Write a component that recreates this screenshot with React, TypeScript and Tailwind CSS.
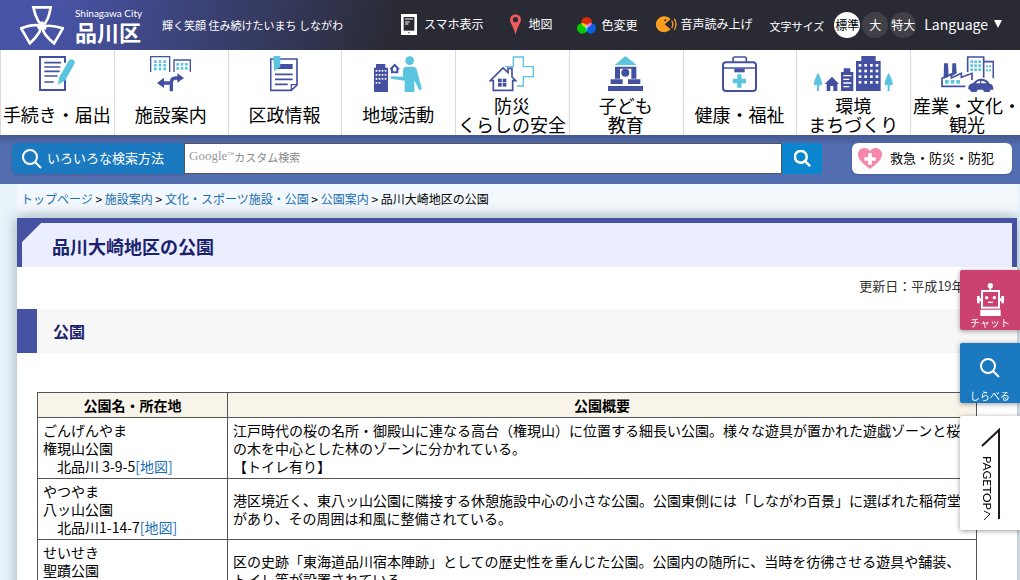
import type { ReactNode } from "react";

const NAVY = "#4451a2";
const CYAN = "#5bc5e0";

type IconProps = { w: number; box: number; children: ReactNode };

function NavIcon({ w, box, children }: IconProps) {
    return (
        <svg width={w} height={36} viewBox={`0 0 ${box} 108`} fill="none" aria-hidden="true">
            {children}
        </svg>
    );
}

type DotsProps = { x: number; y: number; cols: number; rows: number; dx: number; dy: number; s: number; fill: string };

function Dots({ x, y, cols, rows, dx, dy, s, fill }: DotsProps) {
    return (
        <>
            {Array.from({ length: cols * rows }, (_, i) => (
                <rect key={i} x={x + (i % cols) * dx} y={y + Math.floor(i / cols) * dy} width={s} height={s} fill={fill} />
            ))}
        </>
    );
}

const navItems = [
    {
        lines: ["手続き・届出"],
        icon: (
            <NavIcon w={36} box={108}>
                <path d="M78 20V3H3v99h75V70" stroke={NAVY} strokeWidth="6" />
                <path d="M16 20h50M16 33h48M16 46h46M16 60h40M16 78h28" stroke={NAVY} strokeWidth="5" />
                <path d="M97 20L72 64" stroke={CYAN} strokeWidth="20" strokeLinecap="round" />
                <path d="M61 62l-4 24 22-13z" fill={CYAN} />
            </NavIcon>
        ),
    },
    {
        lines: ["施設案内"],
        icon: (
            <NavIcon w={41} box={123}>
                <path d="M2 48V2h57v46M72 48V12h49v36" stroke={NAVY} strokeWidth="4" />
                <Dots x={12} y={13} cols={3} rows={3} dx={14} dy={11} s={8} fill={CYAN} />
                <Dots x={79} y={21} cols={3} rows={2} dx={13} dy={12} s={8} fill={CYAN} />
                <path d="M64 106V80q0-14 14-14h8M64 81H38" stroke={NAVY} strokeWidth="10" />
                <path d="M82 52l20 14-20 14zM42 65L21 81l21 15z" fill={NAVY} />
            </NavIcon>
        ),
    },
    {
        lines: ["区政情報"],
        icon: (
            <NavIcon w={28} box={84}>
                <path d="M2 9h79v78L64 103H2z" stroke={NAVY} strokeWidth="5" />
                <path d="M64 102V86h18" stroke={NAVY} strokeWidth="4" />
                <path d="M20 24h48v15H20z" fill={NAVY} />
                <path d="M15 55h53M15 70h53M15 85h38" stroke={NAVY} strokeWidth="5" />
                <path d="M10 0h21v32L12 46z" fill={CYAN} />
            </NavIcon>
        ),
    },
    {
        lines: ["地域活動"],
        icon: (
            <NavIcon w={48} box={144}>
                <path d="M0 35h6V24h28v11h8v73H0z" fill={NAVY} />
                <Dots x={5} y={42} cols={4} rows={3} dx={9} dy={12} s={5} fill="#fff" />
                <Dots x={5} y={78} cols={2} rows={1} dx={9} dy={12} s={5} fill="#fff" />
                <path d="M49 40l13-13 13 13M54 36v13h16V36" stroke={NAVY} strokeWidth="6" />
                <circle cx="107" cy="14" r="13" fill={CYAN} />
                <path d="M96 32h22q7 0 10 8l16 60-8 3-15-30v35H92V74L54 69q-7-3-3-8l36 1V42q1-9 9-10z" fill={CYAN} />
            </NavIcon>
        ),
    },
    {
        lines: ["防災", "くらしの安全"],
        icon: (
            <NavIcon w={45} box={135}>
                <path d="M48 32h25V3h30v29h30v30h-30v28H84" stroke={CYAN} strokeWidth="4" />
                <path d="M4 74l38-38 15 14V37h12v26l11 11h-9v29H13V74z" stroke={NAVY} strokeWidth="5" />
                <Dots x={27} y={68} cols={2} rows={2} dx={14} dy={13} s={11} fill={NAVY} />
            </NavIcon>
        ),
    },
    {
        lines: ["子ども", "教育"],
        icon: (
            <NavIcon w={35} box={105}>
                <path d="M20 27L52 0l34 27z" fill={CYAN} />
                <path d="M21 32h64v36H70V38H36v30H21zM8 70h36v14H8zM60 70h37v14H60zM0 90h105v15H0z" fill={NAVY} />
                <circle cx="52" cy="50" r="12" fill={NAVY} />
            </NavIcon>
        ),
    },
    {
        lines: ["健康・福祉"],
        icon: (
            <NavIcon w={35} box={105}>
                <rect x="3" y="19" width="99" height="86" rx="9" stroke={NAVY} strokeWidth="6" />
                <path d="M33 18V8q0-5 5-5h30q5 0 5 5v10M3 36h99" stroke={NAVY} strokeWidth="5" />
                <path d="M37 38h31v11H37z" fill={NAVY} />
                <path d="M52 55v40M32 75h40" stroke={CYAN} strokeWidth="13" />
            </NavIcon>
        ),
    },
    {
        lines: ["環境", "まちづくり"],
        icon: (
            <NavIcon w={79} box={237}>
                <path d="M12 50q16 30 11 38H15v17H9V88H1q-5-8 11-38zM224 50q16 30 11 38h-8v17h-6V88h-8q-5-8 11-38z" fill={CYAN} />
                <path d="M32 84l22-22 21 22h-5v21H58V90H49v15H38V84zM81 48h8V37h20v11h9v57H81zM126 15h16V0h43v15h15v90h-74z" fill={NAVY} />
                <path d="M88 59h24M88 70h18M88 81h24M88 92h18" stroke="#fff" strokeWidth="4" />
                <Dots x={134} y={24} cols={4} rows={4} dx={17} dy={17} s={8} fill="#fff" />
            </NavIcon>
        ),
    },
    {
        lines: ["産業・文化・", "観光"],
        icon: (
            <NavIcon w={53} box={159}>
                <path d="M80 48V3h48v62M128 17h29v50" stroke={NAVY} strokeWidth="5" />
                <Dots x={88} y={13} cols={3} rows={3} dx={12} dy={12} s={8} fill={CYAN} />
                <Dots x={135} y={28} cols={2} rows={2} dx={9} dy={12} s={6} fill={CYAN} />
                <path d="M9 22h12l2 40L8 68zM34 22h11l2 30-14 8z" fill={NAVY} />
                <path d="M73 91H3V67l28-13v12l30-14v12l32-12v20" stroke={NAVY} strokeWidth="5" />
                <Dots x={12} y={72} cols={3} rows={1} dx={17} dy={10} s={11} fill={CYAN} />
                <path d="M82 100q-2-16 14-18 10-14 24-14 18 0 26 15 12 2 11 18h-8a12 12 0 0 1-23 0h-16a12 12 0 0 1-23 0z" fill={NAVY} />
                <circle cx="99" cy="101" r="8" fill={NAVY} />
                <circle cx="138" cy="101" r="8" fill={NAVY} />
                <path d="M104 82q6-8 13-8v8zM121 74q11 0 16 8h-16z" fill="#fff" />
            </NavIcon>
        ),
    },
];

const crumbs = ["トップページ", "施設案内", "文化・スポーツ施設・公園", "公園案内"];

const parks = [
    {
        kana: "ごんげんやま",
        name: "権現山公園",
        address: "北品川 3-9-5",
        text: ["江戸時代の桜の名所・御殿山に連なる高台（権現山）に位置する細長い公園。様々な遊具が置かれた遊戯ゾーンと桜の木を中心とした林のゾーンに分かれている。", "【トイレ有り】"],
    },
    {
        kana: "やつやま",
        name: "八ッ山公園",
        address: "北品川1-14-7",
        text: ["港区境近く、東八ッ山公園に隣接する休憩施設中心の小さな公園。公園東側には「しながわ百景」に選ばれた稲荷堂があり、その周囲は和風に整備されている。"],
    },
    {
        kana: "せいせき",
        name: "聖蹟公園",
        address: "北品川2-7-21",
        text: ["区の史跡「東海道品川宿本陣跡」としての歴史性を重んじた公園。公園内の随所に、当時を彷彿させる遊具や舗装、トイレ等が設置されている。"],
    },
];

function Emblem() {
    const petal = "M12 8Q-16-8-26-57H26Q20-16 2-2";
    return (
        <svg width="44" height="40" viewBox="60 16 132 120" fill="none" stroke="#fff" strokeWidth="8" aria-hidden="true">
            <g transform="translate(126 80)">
                <path d={petal} />
                <path d={petal} transform="rotate(120)" />
                <path d={petal} transform="rotate(240)" />
            </g>
        </svg>
    );
}

function Magnifier({ size, width }: { size: number; width: number }) {
    return (
        <svg width={size} height={size} viewBox="0 0 20 20" fill="none" stroke="currentColor" strokeWidth={width} aria-hidden="true">
            <circle cx="8" cy="8" r="7" />
            <path d="M13 13l6 6" />
        </svg>
    );
}

function Header() {
    return (
        <header className="flex h-[50px] items-center whitespace-nowrap bg-[linear-gradient(105deg,#4753a4_60px,#2a2a34_390px)] pl-5 pr-[18px] text-xs text-white">
            <a href="#top" className="flex items-center gap-[11px]">
                <Emblem />
                <span className="flex w-[70px] flex-col">
                    <span className="font-[Lato,sans-serif] text-[10px] leading-3">Shinagawa City</span>
                    <span className="text-[22px] font-bold leading-6">品川区</span>
                </span>
            </a>
            <p className="ml-[17px] text-[11px]">輝く笑顔 住み続けたいまち しながわ</p>

            <div className="ml-auto flex items-center">
                <a href="#sp" className="flex items-center gap-[7px] pb-[2px]">
                    <svg width="16" height="21" viewBox="0 0 48 63" aria-hidden="true">
                        <path d="M0 0h48v63H0z" fill="#fff" />
                        <path d="M8 9h32v41H8z" fill="#2a2a34" />
                        <path d="M12 15h24M12 24h14M12 30h10" stroke="#fff" strokeWidth="3" />
                        <circle cx="24" cy="56" r="2" fill="#2a2a34" />
                    </svg>
                    スマホ表示
                </a>
                <a href="#map" className="ml-[26px] flex items-center gap-2 pb-[2px]">
                    <svg width="11" height="21" viewBox="0 0 34 64" aria-hidden="true">
                        <path d="M17 0a17 17 0 0 1 17 17c0 10-11 20-17 47C11 37 0 27 0 17A17 17 0 0 1 17 0zm0 9a8 8 0 1 0 0 16 8 8 0 0 0 0-16z" fill="#f05a5c" fillRule="evenodd" />
                    </svg>
                    地図
                </a>
                <a href="#color" className="ml-6 flex items-center gap-[6px]">
                    <svg width="19" height="17" viewBox="0 0 57 51" className="isolate" aria-hidden="true">
                        <circle cx="29" cy="16" r="16" fill="#dc2c08" className="mix-blend-screen" />
                        <circle cx="16" cy="34" r="16" fill="#0c0" className="mix-blend-screen" />
                        <circle cx="41" cy="34" r="16" fill="#0a5fe0" className="mix-blend-screen" />
                    </svg>
                    色変更
                </a>
                <a href="#voice" className="ml-[18px] flex items-center gap-1 pb-[2px]">
                    <svg width="21" height="17" viewBox="0 0 63 51" fill="none" aria-hidden="true">
                        <path d="M26 25L44 10A25 24 0 1 0 44 40z" fill="#fb9d1f" />
                        <circle cx="28" cy="13" r="3" fill="#2a2a34" />
                        <path d="M47 14q7 11 0 22M55 8q10 17 0 34" stroke="#fb9d1f" strokeWidth="4" />
                    </svg>
                    音声読み上げ
                </a>
                <span className="ml-[17px] pt-[2px] text-[11px]">文字サイズ</span>
                <div className="ml-[10px] flex gap-[2px]">
                    <button className="size-[26px] rounded-full bg-white text-black">標準</button>
                    <button className="size-[26px] rounded-full bg-[#404046]">大</button>
                    <button className="size-[26px] rounded-full bg-[#404046]">特大</button>
                </div>
                <button className="ml-2 flex items-center gap-[6px] pb-[2px] text-sm">
                    Language
                    <svg width="8" height="8" viewBox="0 0 8 8" aria-hidden="true">
                        <path d="M0 0h8L4 8z" fill="#fff" />
                    </svg>
                </button>
            </div>
        </header>
    );
}

function GlobalNav() {
    return (
        <nav className="overflow-x-clip bg-white">
            <ul className="-mr-1 grid grid-cols-9">
                {navItems.map((item) => (
                    <li key={item.lines[0]} className="border-l border-[#d9d9de] pr-px">
                        <a href="#nav" className="flex h-[85px] flex-col items-center pt-[6px] text-lg text-black">
                            {item.icon}
                            <span className="flex flex-1 flex-col justify-center whitespace-nowrap pt-[2px] text-center leading-[19px]">
                                {item.lines.map((line) => (
                                    <span key={line}>{line}</span>
                                ))}
                            </span>
                        </a>
                    </li>
                ))}
            </ul>
        </nav>
    );
}

function SearchBar() {
    return (
        <div className="flex h-[49px] items-start bg-[linear-gradient(#45588f,#526db0_10px)] pl-3 pr-2 pt-2">
            <a href="#search" className="flex h-[31px] w-[172px] items-center gap-[5px] rounded-l-md bg-[#1b7abf] pl-[10px] text-[13px] text-white shadow">
                <Magnifier size={20} width={2} />
                いろいろな検索方法
            </a>
            <form className="flex flex-1" onSubmit={(e) => e.preventDefault()}>
                <label className="flex h-[31px] flex-1 border border-[#555] bg-white pl-1 text-[11px] text-[#999]">
                    <span className="font-['Liberation_Serif',serif] text-[13px] leading-6">
                        Google<sup className="text-[7px]">™</sup>
                    </span>
                    <input
                        type="text"
                        aria-label="サイト内検索"
                        placeholder="カスタム検索"
                        className="h-[25px] min-w-0 flex-1 text-black outline-none placeholder:text-[#888]"
                    />
                </label>
                <button aria-label="検索" className="flex h-[31px] w-10 items-center justify-center rounded-r-sm bg-[#0a86cf] text-white">
                    <Magnifier size={17} width={3} />
                </button>
            </form>
            <a href="#emergency" className="ml-[30px] flex h-[31px] w-40 items-center gap-2 rounded-md bg-white pl-[6px] text-[13px] text-black shadow">
                <svg width="24" height="21" viewBox="0 0 72 63" aria-hidden="true">
                    <path d="M36 63C16 48 0 36 0 19 0-2 28-6 36 10 44-6 72-2 72 19c0 17-16 29-36 44z" fill="#f487aa" />
                    <path d="M36 16v34M19 33h34" stroke="#fff" strokeWidth="11" />
                </svg>
                救急・防災・防犯
            </a>
        </div>
    );
}

function SideButtons() {
    return (
        <div className="fixed right-0 top-[270px] flex w-[60px] flex-col gap-[13px] text-[10px] leading-[14px] text-white">
            <a href="#chat" className="flex h-[60px] flex-col items-center justify-end rounded-l-xs bg-[#cb4271] shadow-[0_1px_5px_rgba(0,0,0,0.4)]">
                <svg width="27" height="33" viewBox="0 0 81 99" fill="none" aria-hidden="true">
                    <circle cx="40" cy="8" r="8" fill="#fff" />
                    <path d="M40 8v16" stroke="#fff" strokeWidth="5" />
                    <rect x="15" y="24" width="51" height="50" stroke="#fff" strokeWidth="6" />
                    <path d="M0 39h8v22H0zM73 39h8v22h-8zM8 46h6v8H8zM67 46h6v8h-6zM10 80h61v19H10z" fill="#fff" />
                    <circle cx="29" cy="44" r="5" fill="#fff" />
                    <circle cx="52" cy="44" r="5" fill="#fff" />
                    <path d="M33 58h15" stroke="#fff" strokeWidth="4" />
                </svg>
                チャット
            </a>
            <a href="#find" className="flex h-[60px] flex-col items-center justify-between rounded-l-xs bg-[#1b7abf] pt-[15px] shadow-[0_1px_5px_rgba(0,0,0,0.4)]">
                <Magnifier size={20} width={2} />
                しらべる
            </a>
            <a href="#top" className="flex h-[114px] justify-center rounded-l-xs bg-white pt-3 text-xs text-black shadow-[0_1px_5px_rgba(0,0,0,0.4)]">
                <span className="mt-7 flex flex-col items-center whitespace-nowrap font-[Lato,sans-serif] leading-3">
                    <span className="[writing-mode:vertical-rl]">PAGETOP</span>
                    <svg width="8" height="11" viewBox="0 0 8 11" fill="none" stroke="#231815" aria-hidden="true">
                        <path d="M1 1l6 3-6 6" />
                    </svg>
                </span>
                <svg width="19" height="91" viewBox="0 0 19 91" className="-ml-3 shrink-0" fill="none" stroke="#231815" strokeWidth="2" aria-hidden="true">
                    <path d="M1 18L18 2v89" />
                </svg>
            </a>
        </div>
    );
}

export default function App() {
    return (
        <div id="top" className="min-h-screen overflow-hidden bg-[#e8f3fa] font-['Noto_Sans_CJK_JP',sans-serif] text-sm text-black">
            <Header />
            <GlobalNav />
            <SearchBar />

            <div className="ml-[17px] mr-[3px]">
                <div className="h-7 whitespace-nowrap bg-[#f3f8fd] pl-1 text-xs leading-[30px]">
                    {crumbs.map((c) => (
                        <span key={c}>
                            <a href="#crumb" className="text-[#1a6fb0]">{c}</a>
                            {" > "}
                        </span>
                    ))}
                    品川大崎地区の公園
                </div>

                <main className="mt-[6px] bg-white pb-10 shadow-[0_0_14px_rgba(60,80,90,0.45)]">
                    <h1 className="h-[49px] border-x-[5px] border-t-[5px] border-[#4552a2] bg-[linear-gradient(135deg,#4552a2_13px,#ebeeff_14px)] pl-[30px] text-lg font-bold leading-[46px] text-[#1a226c]">
                        品川大崎地区の公園
                    </h1>
                    <p className="h-[42px] pr-3 text-right text-[13px] leading-[38px] text-[#333]">更新日：平成19年4月1日</p>
                    <h2 className="h-11 border-l-[20px] border-[#4552a2] bg-[#f7f7f7] pl-4 text-base font-bold leading-[44px] text-[#1a226c]">公園</h2>

                    <div className="ml-5 mr-10 mt-[39px]">
                        <table className="w-full border-collapse leading-[18px]">
                            <thead>
                                <tr className="bg-[#f8f4ea]">
                                    <th className="w-[190px] border border-[#555] px-[5px] py-[3px] font-bold">公園名・所在地</th>
                                    <th className="border border-[#555] px-[5px] py-[3px] font-bold">公園概要</th>
                                </tr>
                            </thead>
                            <tbody>
                                {parks.map((p) => (
                                    <tr key={p.name}>
                                        <td className="border border-[#555] px-[5px] py-[3px]">
                                            {p.kana}
                                            <br />
                                            {p.name}
                                            <br />
                                            {"　"}{p.address}
                                            <a href="#map" className="text-[#1a6fb8]">[地図]</a>
                                        </td>
                                        <td className="border border-[#555] px-[5px] py-[3px]">
                                            {p.text.map((t) => (
                                                <p key={t}>{t}</p>
                                            ))}
                                        </td>
                                    </tr>
                                ))}
                            </tbody>
                        </table>
                    </div>
                </main>
            </div>

            <SideButtons />
        </div>
    );
}
